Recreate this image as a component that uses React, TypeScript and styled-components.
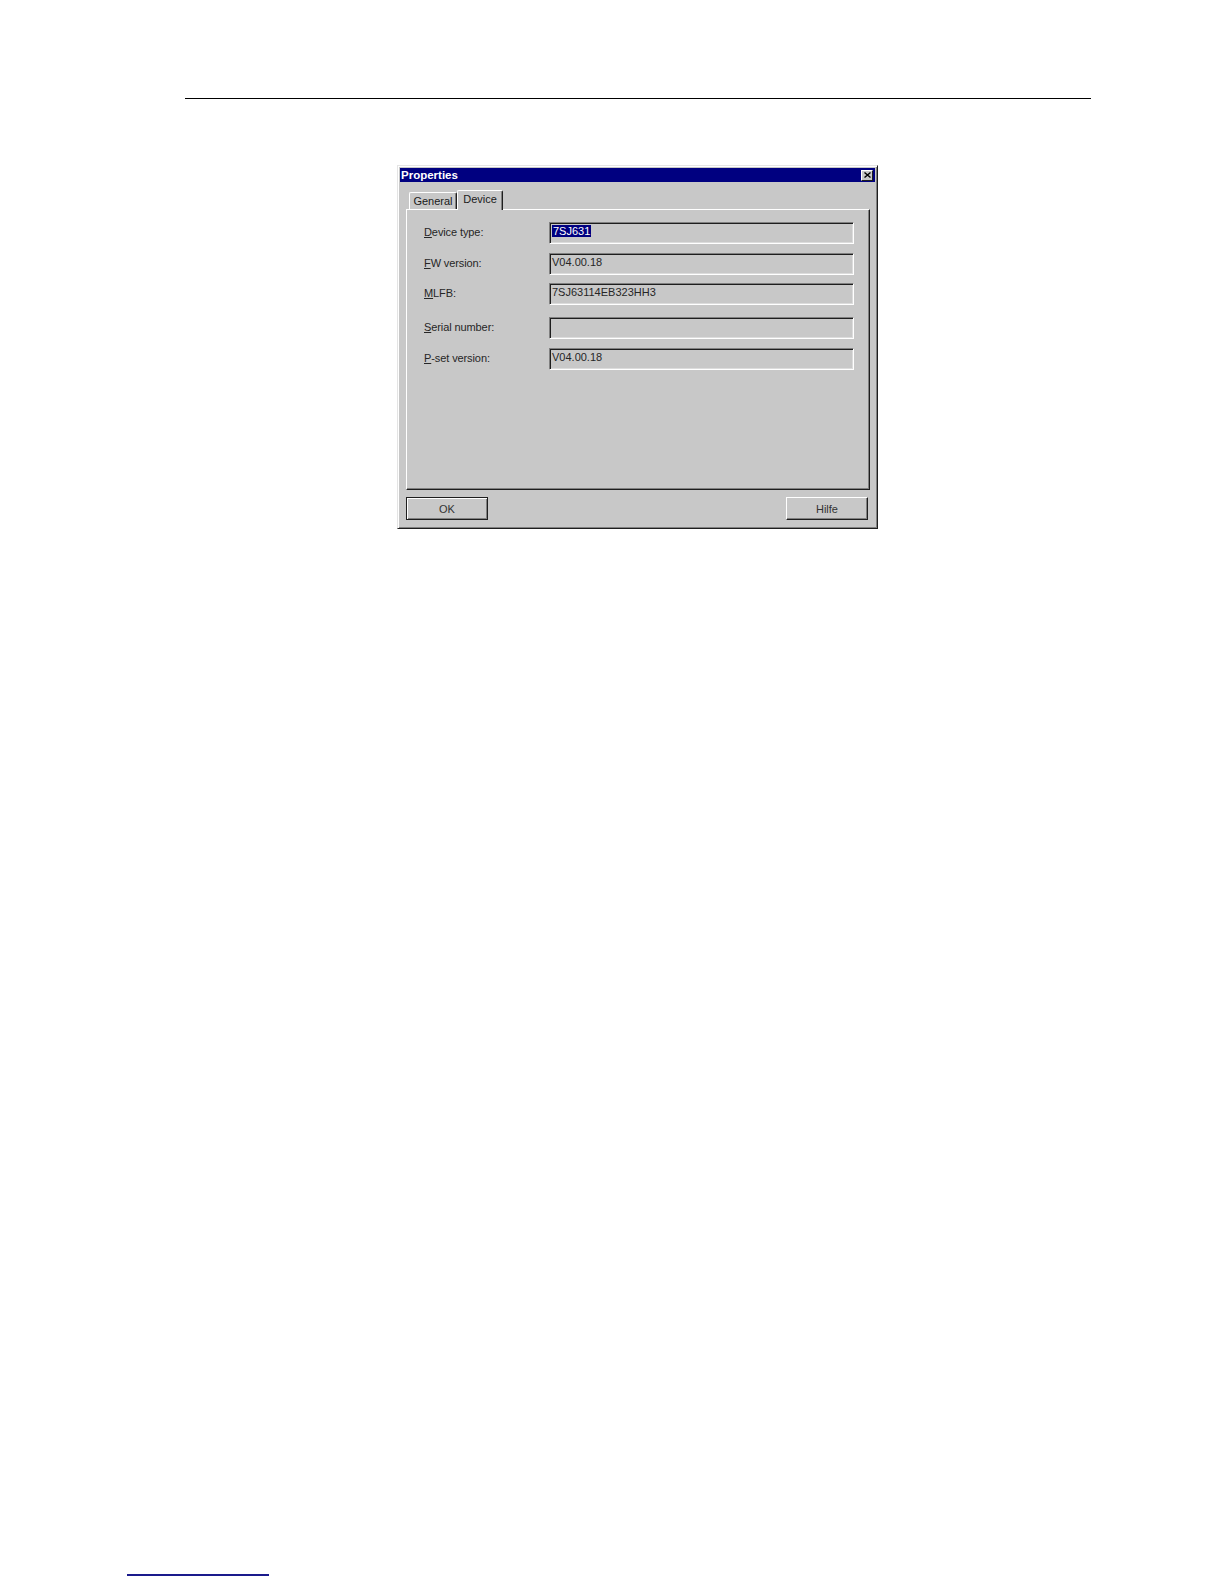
import React from 'react'
import styled, { createGlobalStyle } from 'styled-components'

const GlobalStyle = createGlobalStyle`
  html, body {
    margin: 0;
    padding: 0;
    background: #ffffff;
  }
  body {
    font-family: 'Liberation Sans', Arial, sans-serif;
  }
`

const Page = styled.div`
  width: 1224px;
  height: 1584px;
  display: flex;
  flex-direction: column;
  background: #ffffff;
`

const HeaderRule = styled.div`
  margin: 98px 0 0 185px;
  width: 906px;
  height: 1px;
  background: #000000;
`

const Window = styled.div`
  margin: 66px 0 0 397px;
  width: 481px;
  height: 364px;
  box-sizing: border-box;
  background: #c8c8c8;
  border: 1px solid;
  border-color: #e4e4e4 #1e1e1e #1e1e1e #e4e4e4;
  box-shadow: inset 1px 1px #ffffff, inset -1px -1px #808080;
  padding: 2px;
  display: flex;
  flex-direction: column;
`

const TitleBar = styled.div`
  height: 14px;
  background: #000080;
  display: flex;
  align-items: center;
  justify-content: space-between;
  padding: 0 2px 0 1px;
`

const Title = styled.span`
  color: #ffffff;
  font-weight: bold;
  font-size: 11.5px;
  line-height: 14px;
`

const CloseButton = styled.div`
  width: 10px;
  height: 9px;
  background: #c8c8c8;
  border: 1px solid;
  border-color: #ffffff #1e1e1e #1e1e1e #ffffff;
  display: flex;
  align-items: center;
  justify-content: center;
`

const Body = styled.div`
  padding: 8px 5px 0 6px;
  display: flex;
  flex-direction: column;
`

const TabRow = styled.div`
  display: flex;
  align-items: flex-end;
  height: 19px;
  padding-left: 3px;
`

const Tab = styled.div<{ active?: boolean; width: number }>`
  position: relative;
  z-index: ${({ active }) => (active ? 2 : 1)};
  box-sizing: border-box;
  width: ${({ width }) => width}px;
  height: ${({ active }) => (active ? '20px' : '17px')};
  margin-bottom: ${({ active }) => (active ? '-1px' : '0')};
  padding-top: 2px;
  text-align: center;
  background: #c8c8c8;
  border-top: 1px solid #ffffff;
  border-left: 1px solid #ffffff;
  border-right: 1px solid #1e1e1e;
  border-radius: 2px 2px 0 0;
  box-shadow: inset -1px 0 #808080;
  font-size: 11px;
  line-height: 13px;
  color: #1a1a1a;
  white-space: nowrap;
`

const Panel = styled.div`
  box-sizing: border-box;
  height: 281px;
  border: 1px solid;
  border-color: #ffffff #1e1e1e #1e1e1e #ffffff;
  box-shadow: inset -1px -1px #808080;
  padding: 0 15px 0 17px;
  display: flex;
  flex-direction: column;
`

const Row = styled.div<{ top: number }>`
  margin-top: ${({ top }) => top}px;
  height: 22px;
  display: grid;
  grid-template-columns: 125px 1fr;
  align-items: center;
`

const Label = styled.span`
  font-size: 11px;
  color: #262626;
  margin-top: -2px;
  letter-spacing: -0.1px;

  u {
    text-decoration: underline;
    text-underline-offset: 1px;
  }
`

const Field = styled.div`
  box-sizing: border-box;
  height: 22px;
  border: 1px solid;
  border-color: #808080 #ffffff #ffffff #808080;
  box-shadow: inset 1px 1px #1e1e1e, inset -1px -1px #dcdcdc;
  padding: 2px 3px 0 2px;
  font-size: 11px;
  line-height: 13px;
  color: #262626;
`

const Selected = styled.span`
  background: #000080;
  color: #ffffff;
  padding: 0 1px;
`

const ButtonRow = styled.div`
  display: flex;
  justify-content: space-between;
  margin-top: 7px;
  padding-right: 2px;
`

const Button = styled.div<{ primary?: boolean }>`
  box-sizing: border-box;
  width: 82px;
  height: 23px;
  display: flex;
  align-items: center;
  justify-content: center;
  font-size: 11px;
  color: #333333;
  border: 1px solid;
  border-color: ${({ primary }) => (primary ? '#1e1e1e' : '#ffffff #1e1e1e #1e1e1e #ffffff')};
  box-shadow: ${({ primary }) =>
    primary ? 'inset 1px 1px #ffffff, inset -1px -1px #808080' : 'inset -1px -1px #808080'};
`

const FooterRule = styled.div`
  margin: auto 0 8px 127px;
  width: 142px;
  height: 2px;
  background: #1a1a8c;
`

const fields = [
  { key: 'D', rest: 'evice type:', value: '7SJ631', selected: true, top: 12 },
  { key: 'F', rest: 'W version:', value: 'V04.00.18', top: 9 },
  { key: 'M', rest: 'LFB:', value: '7SJ63114EB323HH3', top: 8 },
  { key: 'S', rest: 'erial number:', value: '', top: 12 },
  { key: 'P', rest: '-set version:', value: 'V04.00.18', top: 9 },
]

const App: React.FC = () => {
  return (
    <>
      <GlobalStyle />
      <Page>
        <HeaderRule />
        <Window>
          <TitleBar>
            <Title>Properties</Title>
            <CloseButton>
              <svg width="7" height="6" viewBox="0 0 7 6">
                <path d="M0.5 0.5 L6.5 5.5 M6.5 0.5 L0.5 5.5" stroke="#000" strokeWidth="1.4" />
              </svg>
            </CloseButton>
          </TitleBar>
          <Body>
            <TabRow>
              <Tab width={48}>General</Tab>
              <Tab active width={46}>
                Device
              </Tab>
            </TabRow>
            <Panel>
              {fields.map((f) => (
                <Row key={f.key} top={f.top}>
                  <Label>
                    <u>{f.key}</u>
                    {f.rest}
                  </Label>
                  <Field>{f.selected ? <Selected>{f.value}</Selected> : f.value}</Field>
                </Row>
              ))}
            </Panel>
            <ButtonRow>
              <Button primary>OK</Button>
              <Button>Hilfe</Button>
            </ButtonRow>
          </Body>
        </Window>
        <FooterRule />
      </Page>
    </>
  )
}

export default App
